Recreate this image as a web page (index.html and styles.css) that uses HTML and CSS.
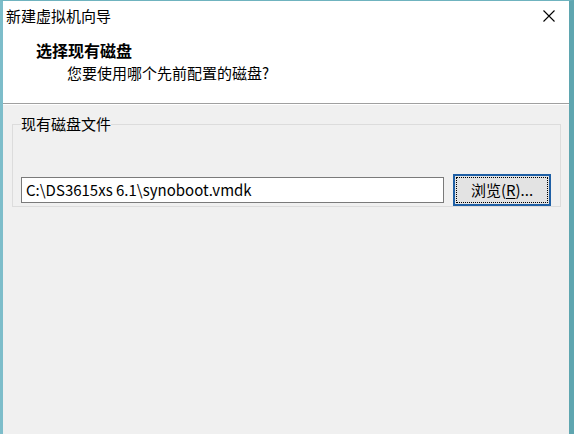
FILE: index.html
```html
<!DOCTYPE html>
<html lang="zh-CN">
<head>
<meta charset="utf-8">
<title>新建虚拟机向导</title>
<link rel="stylesheet" href="styles.css">
</head>
<body>
<div class="window">
  <div class="titlebar">
    <span class="title">新建虚拟机向导</span>
    <span class="close" aria-label="关闭">
      <svg width="12" height="12" viewBox="0 0 12 12"><path d="M0.5 0.5L11.5 11.5M11.5 0.5L0.5 11.5" stroke="#000" stroke-width="1.1" fill="none"/></svg>
    </span>
  </div>
  <div class="header">
    <div class="heading">选择现有磁盘</div>
    <div class="subheading">您要使用哪个先前配置的磁盘?</div>
  </div>
  <div class="content">
    <fieldset class="group">
      <legend class="group-label">现有磁盘文件</legend>
      <div class="file-row">
        <div class="path-input">C:\DS3615xs 6.1\synoboot.vmdk</div>
        <button class="browse"><span class="focus">浏览(<u>R</u>)...</span></button>
      </div>
    </fieldset>
  </div>
</div>
</body>
</html>
```

FILE: styles.css
```css
html, body {
  margin: 0;
  padding: 0;
}
body {
  width: 574px;
  height: 434px;
  overflow: hidden;
  font-family: "Noto Sans CJK SC", "Microsoft YaHei", sans-serif;
  font-size: 15px;
  color: #000;
}
.window {
  box-sizing: border-box;
  width: 574px;
  height: 434px;
  border-top: 1px solid #6fb3bf;
  border-left: 3px solid #7dbdca;
  border-right: 5px solid #5fa6b0;
  display: flex;
  flex-direction: column;
  background: #f0f0f0;
}
.titlebar {
  height: 29px;
  background: #fff;
  display: flex;
  align-items: center;
  justify-content: space-between;
  padding: 0 14px 0 3px;
}
.title {
  font-size: 15px;
  line-height: 20px;
  padding-top: 1px;
}
.close {
  display: flex;
  width: 12px;
  height: 12px;
  margin-top: 1px;
}
.header {
  height: 73px;
  background: #fff;
  padding-left: 33px;
  box-sizing: border-box;
  padding-top: 9px;
}
.heading {
  font-size: 16px;
  font-weight: bold;
  line-height: 22px;
}
.subheading {
  padding-left: 31px;
  font-size: 15px;
  line-height: 22px;
  margin-top: 1px;
}
.content {
  flex: 1;
  border-top: 1px solid #a0a0a0;
  box-shadow: inset 0 1px 0 #fff;
  background: #f0f0f0;
}
.group {
  margin: 10px 8px 0 9px;
  padding: 0 9px 0 8px;
  border: 1px solid #dcdcdc;
  min-width: 0;
}
.group-label {
  padding: 0;
  font-size: 15px;
  line-height: 20px;
}
.file-row {
  display: flex;
  align-items: center;
  gap: 9px;
  margin-top: 40px;
  margin-bottom: 0;
}
.path-input {
  box-sizing: border-box;
  flex: 1;
  height: 26px;
  border: 1px solid #7a7a7a;
  background: #fff;
  padding: 0 4px;
  font-size: 15px;
  line-height: 24px;
  white-space: nowrap;
  overflow: hidden;
}
.browse {
  box-sizing: border-box;
  width: 98px;
  height: 32px;
  border: 2px solid #1e5fa5;
  background: #e3e3e3;
  padding: 1px;
  margin: 0;
  font-family: inherit;
  font-size: 15px;
  color: #000;
  display: flex;
}
.focus {
  flex: 1;
  border: 1px dotted #000;
  display: flex;
  align-items: center;
  justify-content: center;
  line-height: 20px;
}
.focus u {
  text-decoration-thickness: 1px;
  text-underline-offset: 2px;
}
```
